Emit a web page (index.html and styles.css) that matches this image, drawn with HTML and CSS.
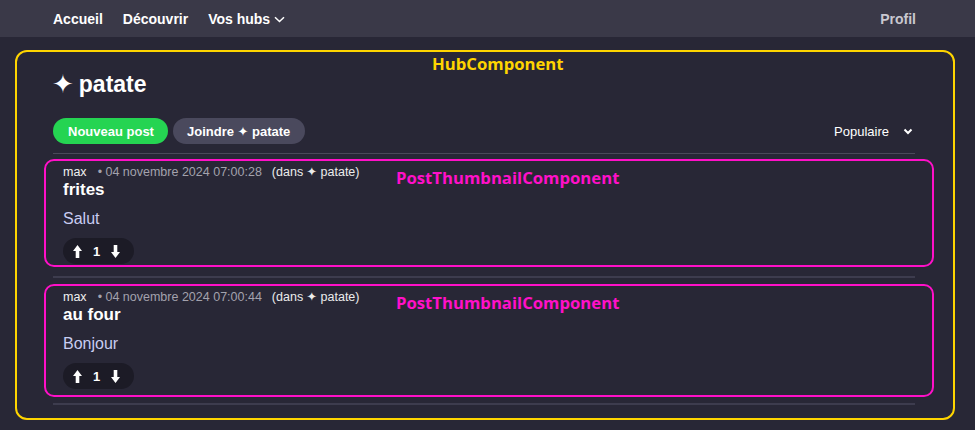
FILE: index.html
```html
<!DOCTYPE html>
<html lang="fr">
<head>
<meta charset="utf-8">
<title>patate</title>
<link rel="stylesheet" href="styles.css">
</head>
<body>
<nav class="topbar">
  <div class="topbar__links">
    <a class="topbar__link" href="#">Accueil</a>
    <a class="topbar__link" href="#">Découvrir</a>
    <a class="topbar__link topbar__link--menu" href="#">Vos hubs
      <svg class="chev chev--thin" width="11" height="7" viewBox="0 0 11 7"><path d="M1 1.2 L5.5 5.5 L10 1.2" fill="none" stroke="#fff" stroke-width="1.5"/></svg>
    </a>
  </div>
  <a class="topbar__link topbar__link--muted" href="#">Profil</a>
</nav>

<main class="hub">
  <span class="label label--hub">HubComponent</span>
  <h1 class="hub__title"><span class="sparkle">✦</span>patate</h1>
  <div class="hub__actions">
    <div class="hub__buttons">
      <button class="pill pill--green">Nouveau post</button>
      <button class="pill pill--grey">Joindre ✦ patate</button>
    </div>
    <div class="sort">Populaire
      <svg class="chev" width="10" height="7" viewBox="0 0 10 7"><path d="M1.5 1.5 L5 5 L8.5 1.5" fill="none" stroke="#fff" stroke-width="2"/></svg>
    </div>
  </div>
  <hr class="divider divider--thin">

  <article class="post">
    <span class="label label--post">PostThumbnailComponent</span>
    <div class="post__meta"><span class="post__author">max</span><span class="post__date">• 04 novembre 2024 07:00:28</span><span class="post__hub">(dans ✦ patate)</span></div>
    <h2 class="post__title">frites</h2>
    <p class="post__body">Salut</p>
    <div class="votes">
      <svg class="arrow" width="9" height="13" viewBox="0 0 9 13"><path d="M4.5 0 L9 6 H6.3 V13 H2.7 V6 H0 Z" fill="#fff"/></svg>
      <span class="votes__count">1</span>
      <svg class="arrow" width="9" height="13" viewBox="0 0 9 13"><path d="M4.5 13 L9 7 H6.3 V0 H2.7 V7 H0 Z" fill="#fff"/></svg>
    </div>
  </article>
  <hr class="divider">

  <article class="post post--roomy">
    <span class="label label--post">PostThumbnailComponent</span>
    <div class="post__meta"><span class="post__author">max</span><span class="post__date">• 04 novembre 2024 07:00:44</span><span class="post__hub">(dans ✦ patate)</span></div>
    <h2 class="post__title">au four</h2>
    <p class="post__body">Bonjour</p>
    <div class="votes">
      <svg class="arrow" width="9" height="13" viewBox="0 0 9 13"><path d="M4.5 0 L9 6 H6.3 V13 H2.7 V6 H0 Z" fill="#fff"/></svg>
      <span class="votes__count">1</span>
      <svg class="arrow" width="9" height="13" viewBox="0 0 9 13"><path d="M4.5 13 L9 7 H6.3 V0 H2.7 V7 H0 Z" fill="#fff"/></svg>
    </div>
  </article>
  <hr class="divider divider--end">
</main>
</body>
</html>
```

FILE: styles.css
```css
* { box-sizing: border-box; }

html, body {
  margin: 0;
  padding: 0;
  background: #282736;
  font-family: "Liberation Sans", Arial, "DejaVu Sans", sans-serif;
  color: #fff;
}

.topbar {
  height: 37px;
  background: #3a3948;
  display: flex;
  align-items: center;
  justify-content: space-between;
  padding: 0 59px 0 53px;
}

.topbar__links {
  display: flex;
  align-items: center;
  gap: 20px;
}

.topbar__link {
  color: #fff;
  text-decoration: none;
  font-weight: bold;
  font-size: 14px;
  display: flex;
  align-items: center;
}

.topbar__link--menu .chev { margin-left: 4px; margin-top: 1px; }

.topbar__link--muted { color: #c9c8d0; }

.hub {
  position: relative;
  margin: 13px 20px 0 15px;
  height: 370px;
  border: 2px solid #ffd500;
  border-radius: 12px;
  padding: 18px 38px 0 36px;
}

.label {
  position: absolute;
  font-family: "Open Sans", "Noto Sans", sans-serif;
  font-weight: 700;
  font-size: 16.7px;
  line-height: 20px;
  white-space: nowrap;
}

.label--hub { color: #ffd500; left: 415px; top: 2px; }
.label--post { color: #ff10c8; left: 350px; top: 7px; }

.hub__title {
  margin: 0;
  font-size: 23px;
  line-height: 28px;
  font-weight: bold;
  display: flex;
  align-items: center;
}

.sparkle {
  font-size: 26px;
  line-height: 28px;
  margin: 0 5px 0 -1px;
}

.hub__actions {
  margin-top: 20px;
  display: flex;
  align-items: center;
  justify-content: space-between;
}

.hub__buttons { display: flex; gap: 5px; }

.pill {
  border: none;
  border-radius: 13px;
  height: 26px;
  padding: 0 14px;
  font-family: inherit;
  font-weight: bold;
  font-size: 13px;
  color: #fff;
}

.pill--green { background: #25d452; padding: 0 14px 0 15px; }
.pill--grey { background: #4a495d; padding: 0 15px 0 14px; }

.sort {
  font-size: 13px;
  display: flex;
  align-items: center;
  gap: 14px;
  margin-right: 2px;
}

.divider {
  border: none;
  height: 2px;
  background: #3d3c4e;
  margin: 9px 0 6px;
}

.divider--thin {
  height: 1px;
  background: #4a495a;
  margin: 9px 0 5px;
}

.divider--end { margin-top: 6px; }

.post {
  position: relative;
  margin: 0 -19px 0 -9px;
  border: 2px solid #ff10c8;
  border-radius: 10px;
  padding: 3px 17px 1px;
}

.post--roomy { padding-bottom: 6px; }

.post__meta {
  font-size: 12.5px;
  line-height: 16px;
  display: flex;
}

.post__author { color: #f0f0f0; }
.post__date { color: #a3a2ad; margin-left: 11px; }
.post__hub { color: #ececec; margin-left: 10px; }

.post__title {
  margin: 0;
  font-size: 17px;
  line-height: 20px;
  font-weight: bold;
}

.post__body {
  margin: 9px 0 0;
  font-size: 16px;
  line-height: 19px;
  color: #c9cdf2;
}

.votes {
  margin-top: 10px;
  width: 71px;
  height: 26px;
  border-radius: 13px;
  background: #1c1b26;
  display: flex;
  align-items: center;
  padding-left: 10px;
  gap: 11px;
}

.votes__count {
  font-size: 13px;
  font-weight: bold;
}
```
